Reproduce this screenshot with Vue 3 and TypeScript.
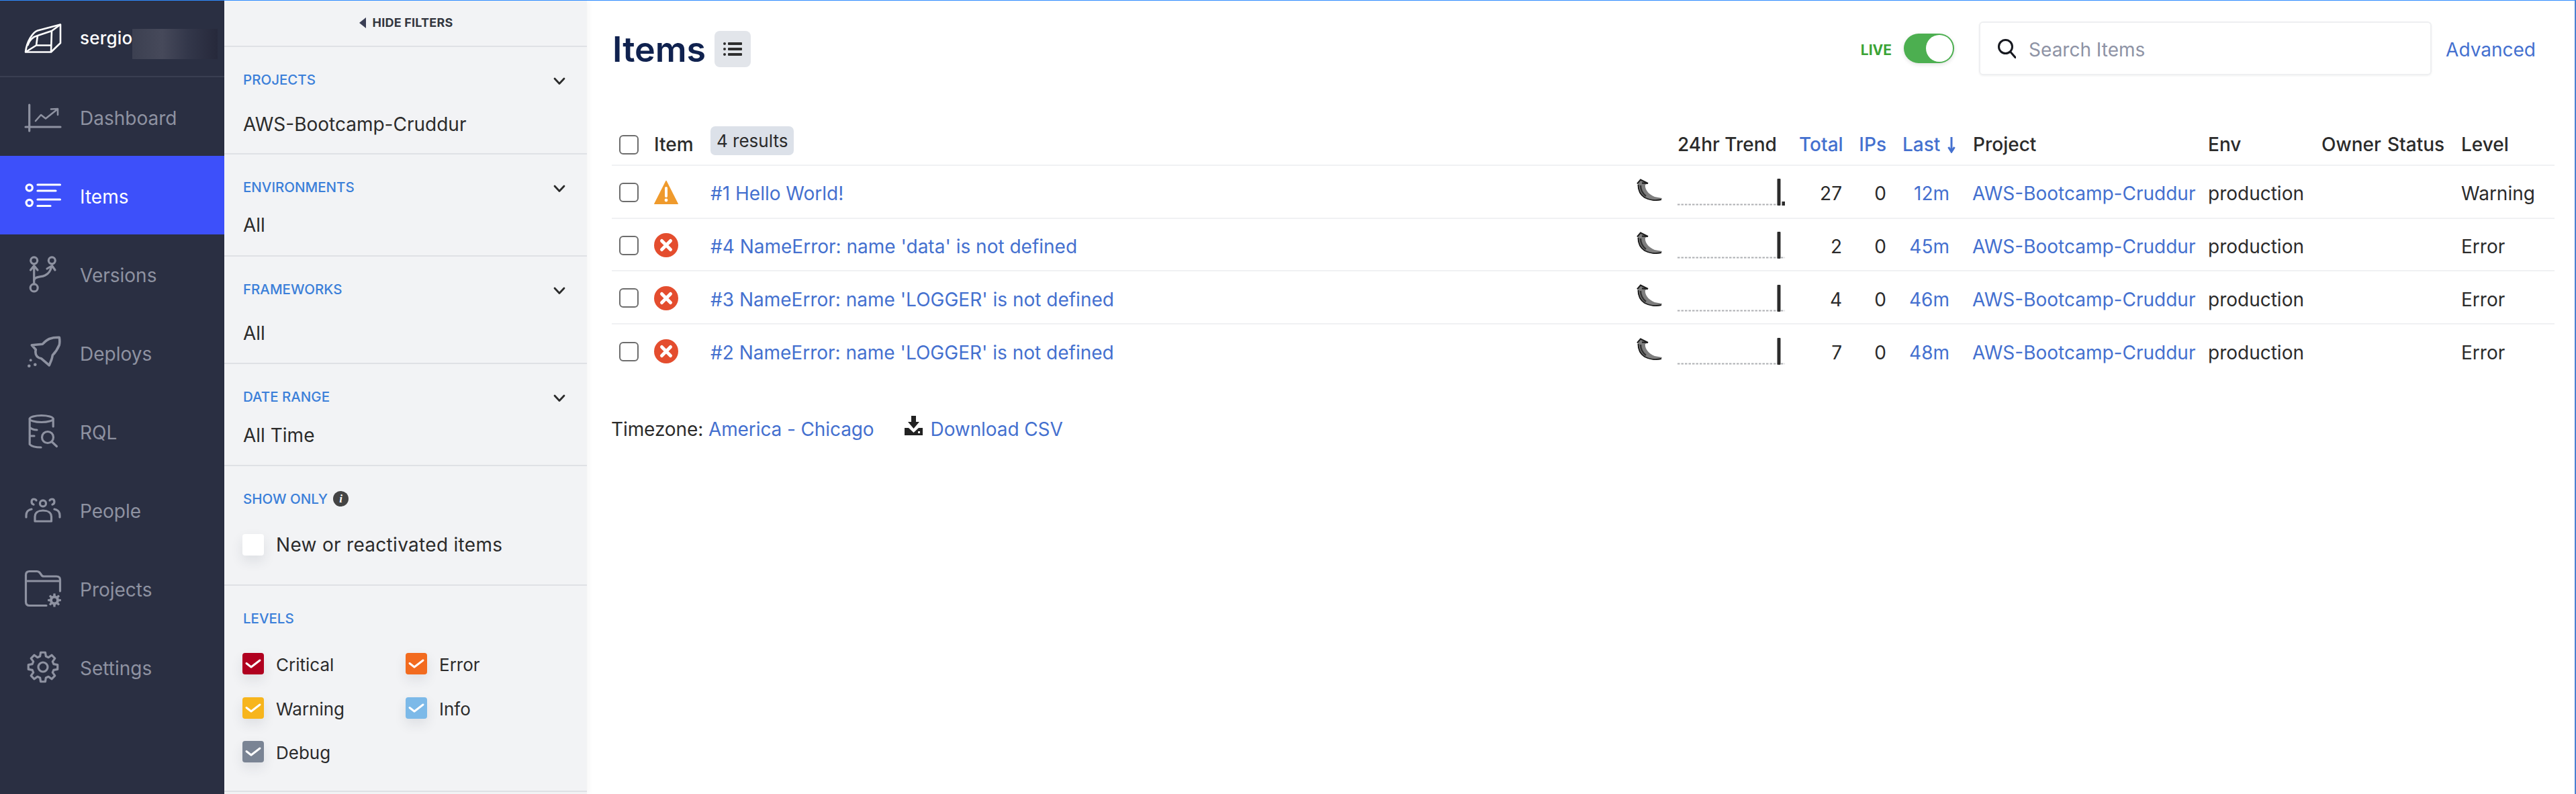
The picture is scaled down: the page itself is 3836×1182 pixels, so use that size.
<script setup lang="ts">
interface NavItem { label: string; key: string; active?: boolean }
interface Row { id: number; title: string; level: string; total: number; last: string; warn?: boolean; dot?: boolean }

const nav: NavItem[] = [
  { label: 'Dashboard', key: 'dash' },
  { label: 'Items', key: 'items', active: true },
  { label: 'Versions', key: 'versions' },
  { label: 'Deploys', key: 'deploys' },
  { label: 'RQL', key: 'rql' },
  { label: 'People', key: 'people' },
  { label: 'Projects', key: 'projects' },
  { label: 'Settings', key: 'settings' },
]

const filters = [
  { label: 'PROJECTS', value: 'AWS-Bootcamp-Cruddur', cls: 'sec-projects' },
  { label: 'ENVIRONMENTS', value: 'All', cls: 'sec-env' },
  { label: 'FRAMEWORKS', value: 'All', cls: 'sec-frame' },
  { label: 'DATE RANGE', value: 'All Time', cls: 'sec-date' },
]

const levels = [
  { label: 'Critical', color: '#b0001f' },
  { label: 'Error', color: '#f26b1f' },
  { label: 'Warning', color: '#f7b51d' },
  { label: 'Info', color: '#7cb9e8' },
  { label: 'Debug', color: '#7a8494' },
]

const rows: Row[] = [
  { id: 1, title: 'Hello World!', level: 'Warning', total: 27, last: '12m', warn: true, dot: true },
  { id: 4, title: "NameError: name 'data' is not defined", level: 'Error', total: 2, last: '45m' },
  { id: 3, title: "NameError: name 'LOGGER' is not defined", level: 'Error', total: 4, last: '46m' },
  { id: 2, title: "NameError: name 'LOGGER' is not defined", level: 'Error', total: 7, last: '48m' },
]

function gear(cx: number, cy: number, outer: number, inner: number, teeth: number): string {
  const pts: string[] = []
  const step = (Math.PI * 2) / teeth
  for (let i = 0; i < teeth; i++) {
    const a = i * step - Math.PI / 2
    const spec: [number, number][] = [
      [inner, a - step * 0.34],
      [outer, a - step * 0.2],
      [outer, a + step * 0.2],
      [inner, a + step * 0.34],
    ]
    for (const [r, t] of spec) {
      pts.push(`${(cx + r * Math.cos(t)).toFixed(2)},${(cy + r * Math.sin(t)).toFixed(2)}`)
    }
  }
  return 'M' + pts.join('L') + 'Z'
}
const settingsGear = gear(27, 27, 22, 16.5, 8)
const folderGear = gear(44, 44.5, 10, 7, 8)
</script>

<template>
  <div class="app">
    <aside class="sidebar">
      <div class="brand">
        <svg class="icon" viewBox="0 0 54 44" width="54" height="44" fill="none" stroke="#fff" stroke-width="2.6" stroke-linejoin="round">
          <path d="M1 42.5C3 26 12 13 19 10.500L53 1.500V29L39 42.500Z" />
          <path d="M19 18L40 11L53 1.500M40 11L39 42.500M19 18L17 32.500H39.500M1 42.500L17 32.500M19 18C11 20 6 27 4 33" />
        </svg>
        <span class="brand-name">sergio</span>
        <span class="blurred"></span>
      </div>
      <nav class="nav">
        <a v-for="item in nav" :key="item.key" class="nav-item" :class="{ active: item.active }">
          <svg class="icon" viewBox="0 0 54 54" width="54" height="54" fill="none" stroke="currentColor" stroke-width="3.2" stroke-linecap="round" stroke-linejoin="round">
            <g v-if="item.key === 'dash'">
              <path d="M6.700 9V48M1 42H53" />
              <path d="M16 33L24 24L31 29.500L48 16M39 15.500L49 15V24" stroke-width="2.600" />
            </g>
            <g v-else-if="item.key === 'items'">
              <circle cx="6.700" cy="15.500" r="4.600" />
              <circle cx="6.700" cy="38" r="4.600" />
              <path d="M19 11H52.500M19 20H46M19 33H52.500M19 42.500H38" />
            </g>
            <g v-else-if="item.key === 'versions'">
              <circle cx="13.700" cy="6.800" r="5" />
              <circle cx="40.300" cy="6.800" r="5" />
              <circle cx="13.700" cy="47.400" r="5.500" />
              <path d="M13.700 42V17M8.500 21L13.700 14.500L19 21" />
              <path d="M13.700 36C15 30 24 32 30 29C36 26 38 22 40 15.500M33 19L40.500 14.500L45 21" />
            </g>
            <g v-else-if="item.key === 'deploys'">
              <path d="M51.300 4.200C44 4 40 5 36.300 6.500C32 8.500 29 11.500 26.300 14.200L10.300 15.800L16.300 22.500C15.500 26 16 30 18 32.500C20 34.500 22 35.500 24.700 35.800L36.300 45.800L39.700 37.500C40.500 35 41 33 41.300 30.800C45 27 49 21 51.300 15.500C52 12 52 8 51.300 4.200Z" stroke-width="3.600" />
              <circle cx="8.700" cy="38.200" r="1.900" fill="currentColor" stroke="none" />
              <circle cx="6.300" cy="46.800" r="2.300" fill="currentColor" stroke="none" />
              <circle cx="15.300" cy="44.800" r="2.300" fill="currentColor" stroke="none" />
            </g>
            <g v-else-if="item.key === 'rql'">
              <ellipse cx="24.700" cy="8.500" rx="17.500" ry="5" />
              <path d="M7.200 8.500V46.500C10 49.500 17 51 24 51M42.200 8.500V20M7.200 21C10 24 14 25 18 25M7.200 34H14" />
              <circle cx="34" cy="36" r="8.500" />
              <path d="M40 42.500L47.500 49.500" />
            </g>
            <g v-else-if="item.key === 'people'">
              <circle cx="27" cy="17.400" r="4.500" />
              <path d="M15 44V37C15 31 20 28 27 28C34 28 39.500 31 39.500 37V44Z" />
              <path d="M13 19C9 18 9 11 13.500 11C15 11 17 12 17 13M41 19C45 18 45 11 40.500 11C39 11 37 12 37 13" />
              <path d="M2 38V35C2 30 5 27 10 26M52 38V35C52 30 49 27 44 26" />
            </g>
            <g v-else-if="item.key === 'projects'">
              <path d="M32 52.500H7C3.500 52.500 1.500 50.500 1.500 47V7C1.500 3.500 3.500 1.500 7 1.500H18C21 1.500 22 3 24 6C25 8 26 9 28 9H47C50.500 9 52.500 11 52.500 14V31" />
              <path d="M1.500 16H52.500" />
              <path :d="folderGear" fill="currentColor" stroke="none" />
              <circle cx="44" cy="44.500" r="3" fill="#2a2f42" stroke="none" />
            </g>
            <g v-else>
              <path :d="settingsGear" />
              <circle cx="27" cy="27" r="7" />
            </g>
          </svg>
          <span class="nav-label">{{ item.label }}</span>
        </a>
      </nav>
    </aside>

    <section class="filters">
      <div class="hide-row">
        <svg viewBox="0 0 12 16" width="12" height="16"><path d="M11 0V16L1 8Z" fill="#3b3f55" /></svg>
        <span>HIDE FILTERS</span>
      </div>
      <div v-for="f in filters" :key="f.label" class="sec" :class="f.cls">
        <div class="sec-head">
          <span class="sec-label">{{ f.label }}</span>
          <svg class="chev" viewBox="0 0 18 12" width="18" height="12" fill="none" stroke="#2b2b2b" stroke-width="2.800" stroke-linecap="round" stroke-linejoin="round"><path d="M2 2L9 9.500L16 2" /></svg>
        </div>
        <div class="sec-value">{{ f.value }}</div>
      </div>
      <div class="sec sec-show">
        <div class="sec-head start">
          <span class="sec-label">SHOW ONLY</span>
          <span class="info">i</span>
        </div>
        <label class="check-row">
          <span class="box blank"></span>
          <span>New or reactivated items</span>
        </label>
      </div>
      <div class="sec sec-levels">
        <div class="sec-head"><span class="sec-label">LEVELS</span></div>
        <div class="level-grid">
          <label v-for="l in levels" :key="l.label" class="check-row">
            <span class="box" :style="{ background: l.color }">
              <svg viewBox="0 0 32 32" width="32" height="32" fill="none" stroke="#fff" stroke-width="3" stroke-linecap="round" stroke-linejoin="round"><path d="M6 15.500L13 21L26 11" /></svg>
            </span>
            <span class="level-text">{{ l.label }}</span>
          </label>
        </div>
      </div>
    </section>

    <main class="main">
      <header class="topbar">
        <h1 class="title">Items</h1>
        <button class="list-btn" type="button" aria-label="Display options">
          <svg viewBox="0 0 28 22" width="28" height="22" fill="#2e2e2e">
            <rect x="0" y="1" width="4" height="4" rx="2" /><rect x="0" y="9" width="4" height="4" rx="2" /><rect x="0" y="17" width="4" height="4" rx="2" />
            <rect x="7" y="1" width="21" height="4" rx="1" /><rect x="7" y="9" width="21" height="4" rx="1" /><rect x="7" y="17" width="21" height="4" rx="1" />
          </svg>
        </button>
        <div class="spacer"></div>
        <span class="live">LIVE</span>
        <span class="toggle"><span class="knob"></span></span>
        <label class="search">
          <svg viewBox="0 0 28 30" width="28" height="30" fill="none" stroke="#16181f" stroke-width="3" stroke-linecap="round"><circle cx="12.500" cy="12.500" r="10" /><path d="M20 20.500L27 28.500" /></svg>
          <input type="text" placeholder="Search Items" />
        </label>
        <a class="link advanced">Advanced</a>
      </header>

      <div class="table">
        <div class="grid head">
          <span class="c-check"><span class="tick"></span></span>
          <span class="th">Item</span>
          <span class="c-item"><span class="badge">4 results</span></span>
          <span></span>
          <span class="th">24hr Trend</span>
          <span class="th link num">Total</span>
          <span class="th link num">IPs</span>
          <span class="th link c-lasth">Last
            <svg viewBox="0 0 12 26" width="12" height="26" fill="none" stroke="#4470cf" stroke-width="3"><path d="M6 2V23M1.500 17L6 24L10.500 17" /></svg>
          </span>
          <span class="th">Project</span>
          <span class="th">Env</span>
          <span class="th">Owner</span>
          <span class="th">Status</span>
          <span class="th">Level</span>
        </div>
        <div v-for="r in rows" :key="r.id" class="grid row">
          <span class="c-check"><span class="tick"></span></span>
          <span class="c-status">
            <svg v-if="r.warn" viewBox="0 0 36 36" width="36" height="36">
              <path d="M18 1L35.500 35.500H.5Z" fill="#ef9a2c" stroke="#ef9a2c" stroke-width="1" stroke-linejoin="round" />
              <path d="M18 12V24" stroke="#fff" stroke-width="4" stroke-linecap="round" />
              <circle cx="18" cy="30" r="2.400" fill="#fff" />
            </svg>
            <svg v-else viewBox="0 0 36 36" width="36" height="36">
              <circle cx="18" cy="18" r="18" fill="#e44d2e" />
              <path d="M11.500 11.500L24.500 24.500M24.500 11.500L11.500 24.500" stroke="#fff" stroke-width="5" stroke-linecap="round" />
            </svg>
          </span>
          <a class="link cell">#{{ r.id }} {{ r.title }}</a>
          <span class="c-flask">
            <svg viewBox="0 0 38 33" width="38" height="33">
              <path d="M2 8L6 1L17 7L13 9C12 15 17 23 27 27L38 29L37 31C30 33 19 33 11 28C5 24 2 16 2 8Z" fill="#7e7e7e" />
              <path d="M1 7.500L6 1.500L17 7L8 6.500M2.500 9C2.500 17 6 24 12 28C19 32 29 33 37 31" fill="none" stroke="#1f1f1f" stroke-width="2" />
              <path d="M6 10C6 16 9 22 14 26" fill="none" stroke="#333" stroke-width="2.500" />
            </svg>
          </span>
          <span class="c-spark">
            <svg viewBox="0 0 160 46" width="160" height="46">
              <path :d="r.dot ? 'M0 42.500H149' : 'M0 42.500H160'" stroke="#aeb0b3" stroke-width="2" stroke-dasharray="3.500 2" fill="none" />
              <rect x="148.500" y="4" width="5" height="40" rx="1" fill="#2b2b2b" />
              <rect v-if="r.dot" x="155.500" y="38" width="4.500" height="6" fill="#2b2b2b" />
            </svg>
          </span>
          <span class="num cell">{{ r.total }}</span>
          <span class="num cell">0</span>
          <a class="link num c-last cell">{{ r.last }}</a>
          <a class="link cell aws">AWS-Bootcamp-Cruddur</a>
          <span class="cell">production</span>
          <span></span>
          <span></span>
          <span class="cell">{{ r.level }}</span>
        </div>
      </div>

      <footer class="foot">
        <span>Timezone: <a class="link">America - Chicago</a></span>
        <a class="link download">
          <svg viewBox="0 0 27 29" width="27" height="29" fill="#222">
            <path d="M10 0H17V9H22L13.500 19L5 9H10Z" />
            <path d="M0 18H6L13.500 25L21 18H27V29H0Z" />
            <rect x="20" y="23" width="3" height="3" fill="#fff" />
          </svg>
          <span>Download CSV</span>
        </a>
      </footer>
    </main>
  </div>
</template>

<style>
html, body { margin: 0; background: #fff; }
</style>

<style scoped>
* { box-sizing: border-box; }
.app {
  display: flex;
  height: 1182px;
  overflow: hidden;
  border-top: 1px solid #2f8cff;
  border-right: 2px solid #4a7fcf;
  font-family: Inter, "Liberation Sans", sans-serif;
  font-size: 28px;
  color: #2b2b2b;
  background: #fff;
}
.sidebar { width: 334px; flex: none; background: #2a2f42; color: #8e92a1; }
.brand {
  height: 114px;
  display: flex;
  align-items: center;
  padding-left: 37px;
  border-bottom: 2px solid #393e51;
  color: #fff;
}
.brand-name { margin-left: 28px; font-size: 26px; font-weight: 500; letter-spacing: .2px; position: relative; top: -1px; }
.blurred {
  width: 127px;
  height: 45px;
  margin-top: 17px;
  background: linear-gradient(90deg, #3c4051 0%, #46495a 35%, #33374a 65%, #26293b 100%);
}
.icon { flex: none; overflow: visible; }
.nav-item {
  height: 117px;
  display: flex;
  align-items: center;
  gap: 28px;
  padding-left: 37px;
}
.nav-item.active { background: #3d50fa; color: #fff; }
.nav-label { margin-top: 4px; }

.filters {
  width: 540px;
  flex: none;
  background: #f2f3f5;
  box-shadow: 3px 0 8px rgba(0, 0, 0, .035);
  position: relative;
}
.hide-row {
  height: 69px;
  display: flex;
  align-items: center;
  justify-content: center;
  gap: 9px;
  padding-bottom: 2px;
  border-bottom: 2px solid #dfe1e5;
  font-size: 18px;
  font-weight: 700;
  color: #33363f;
  letter-spacing: .2px;
}
.sec { border-bottom: 2px solid #dfe1e5; padding: 36px 28px 0 28px; }
.sec-projects { height: 160px; }
.sec-env { height: 152px; }
.sec-frame { height: 160px; }
.sec-date { height: 152px; }
.sec-show { height: 178px; }
.sec-levels { height: 307px; }
.sec-head {
  height: 24px;
  display: flex;
  align-items: center;
  justify-content: space-between;
}
.sec-head.start { justify-content: flex-start; gap: 8px; }
.sec-label { font-size: 20.500px; font-weight: 500; color: #3b7fd9; }
.chev { margin: 6px 4px 0 0; }
.sec-value { line-height: 40px; color: #2b2b2b; }
.sec-projects .sec-value { margin-top: 35px; }
.sec-env .sec-value { margin-top: 25px; }
.sec-frame .sec-value { margin-top: 34px; }
.sec-date .sec-value { margin-top: 26px; }
.info {
  width: 23px;
  height: 23px;
  border-radius: 50%;
  background: #444;
  color: #fff;
  font: italic 700 17px/23px "Liberation Serif", serif;
  text-align: center;
}
.check-row { display: flex; align-items: center; gap: 18px; font-size: 26px; height: 32px; color: #2b2b2b; margin-left: -1px; }
.sec-show .check-row { margin-top: 41px; font-size: 28px; letter-spacing: .3px; }
.level-text { padding-top: 3px; }
.box {
  width: 32px;
  height: 32px;
  flex: none;
  border-radius: 4px;
  background: #fff;
  box-shadow: 0 8px 18px rgba(40, 50, 70, .1);
  display: block;
}
.box svg { display: block; }
.level-grid {
  display: grid;
  grid-template-columns: 243px 1fr;
  grid-auto-rows: 65.500px;
  margin-top: 40px;
}

.main { flex: 1; min-width: 0; padding: 31px 30px 0 37px; }
.topbar { display: flex; align-items: center; height: 80px; }
.title { margin: 0 13px 0 1px; font-size: 52px; font-weight: 600; color: #10224f; line-height: 80px; position: relative; top: 2px; }
.list-btn {
  width: 54px;
  height: 54px;
  padding: 0;
  border: 0;
  border-radius: 8px;
  background: #e2e5ea;
  display: flex;
  align-items: center;
  justify-content: center;
  position: relative;
  top: 1px;
}
.spacer { flex: 1; }
.live { font-size: 21px; font-weight: 700; color: #3aa335; margin-right: 18px; position: relative; top: 2px; }
.toggle {
  width: 75px;
  height: 44px;
  border-radius: 22px;
  background: #4caf50;
  box-shadow: 0 2px 6px rgba(0, 0, 0, .12);
  margin-right: 37px;
  padding: 2px;
  display: flex;
  justify-content: flex-end;
}
.knob { width: 40px; height: 40px; border-radius: 50%; background: #fff; }
.search {
  width: 674px;
  height: 80px;
  display: flex;
  align-items: center;
  gap: 19px;
  padding-left: 25px;
  border: 2px solid #eeeff1;
  border-radius: 6px;
  box-shadow: 0 1px 3px rgba(0, 0, 0, .06);
  margin-right: 21px;
}
.search input {
  flex: 1;
  border: 0;
  outline: 0;
  background: none;
  font: inherit;
  color: inherit;
  padding: 4px 0 0;
}
.search input::placeholder { color: #8e93a5; opacity: 1; }
.link { color: #4470cf; }
.advanced { white-space: nowrap; margin-right: 28px; padding-top: 4px; }

.table { margin-top: 58px; }
.grid {
  display: grid;
  grid-template-columns: 63px 84px 1380px 60px 181px 64px 66px 129px 350px 169px 98px 110px 137px;
  align-items: center;
}
.grid.head { height: 77px; align-items: end; padding-bottom: 13px; border-bottom: 2px solid #f0f1f3; }
.grid.row { height: 78.700px; border-bottom: 2px solid #f0f1f3; }
.grid.row:last-child { border-bottom: 0; }
.row .c-check, .row .c-status { margin-top: 2px; }
.cell { padding-top: 6px; white-space: nowrap; }
.aws { margin-left: -1px; }
.th { font-weight: 500; line-height: 34px; white-space: nowrap; }
.th.link { color: #4470cf; }
.num { text-align: right; }
.c-check { padding-left: 11px; display: flex; align-items: center; }
.head .c-check { height: 34px; }
.tick {
  width: 29px;
  height: 29px;
  border: 2px solid #6d6d6d;
  border-radius: 6px;
  background: #fff;
  display: block;
}
.c-status, .c-flask, .c-spark { display: flex; align-items: center; }
.c-flask { margin-top: -6px; margin-left: -1px; }
.c-item { display: flex; align-items: flex-end; }
.badge {
  height: 43px;
  padding: 0 9px;
  border-radius: 7px;
  background: #dce1e9;
  display: flex;
  align-items: center;
  font-size: 26px;
  position: relative;
  top: -1px;
}
.c-lasth { padding-left: 24px; display: flex; align-items: center; gap: 11px; }
.c-last { padding-right: 35px; }
.foot {
  display: flex;
  align-items: center;
  gap: 45px;
  margin-top: 60px;
  margin-left: -1px;
  white-space: nowrap;
  letter-spacing: -.1px;
}
.download { display: flex; align-items: center; gap: 12px; }
.download svg { margin-top: -10px; }
</style>
